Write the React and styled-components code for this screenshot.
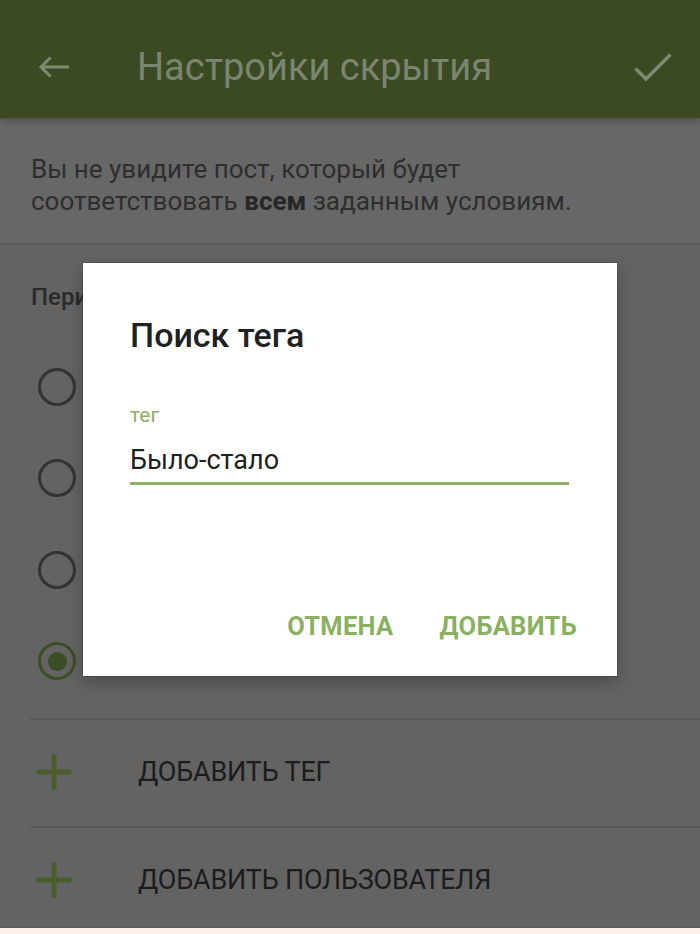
import React from "react"
import styled, { createGlobalStyle } from "styled-components"

const GlobalStyle = createGlobalStyle`
  body {
    margin: 0;
    font-family: Roboto, "Noto Sans", sans-serif;
    background: #636363;
  }
`

const Screen = styled.div`
  position: relative;
  width: 700px;
  height: 934px;
  display: flex;
  flex-direction: column;
  overflow: hidden;
  background: #636363;
`
const AppBar = styled.header`
  flex: 0 0 118px;
  box-sizing: border-box;
  display: flex;
  align-items: center;
  padding: 16px 28px 0 38px;
  background: #3b4a23;
  box-shadow: 0 3px 6px rgba(0, 0, 0, 0.25);
  position: relative;
  z-index: 1;
  color: #7d8a71;
`
const BarTitle = styled.h1`
  margin: 0 0 0 67px;
  font-size: 38px;
  font-weight: 400;
  line-height: 44px;
  color: #7b8670;
`
const BarAction = styled.div`
  margin-left: auto;
  display: flex;
`
const Info = styled.div`
  flex: 0 0 auto;
  height: 127px;
  box-sizing: border-box;
  padding: 35px 20px 0 31px;
  background: #676767;
  border-bottom: 2px solid #5c5c5c;
  font-size: 26px;
  line-height: 32px;
  color: #2e2e2e;
  b {
    font-weight: 700;
    color: #262626;
  }
`
const Content = styled.div`
  flex: 1;
  overflow: hidden;
`
const SectionTitle = styled.div`
  padding: 37px 0 0 31px;
  font-size: 24px;
  font-weight: 500;
  line-height: 30px;
  color: #2a2a2a;
`
const RadioList = styled.div`
  padding-top: 29px;
`
const RadioRow = styled.div`
  height: 91.5px;
  display: flex;
  align-items: center;
  padding-left: 38px;
`
const Radio = styled.span`
  width: 38px;
  height: 38px;
  box-sizing: border-box;
  border-radius: 50%;
  border: 3.5px solid ${props => (props.checked ? "#3d4d25" : "#333333")};
  display: flex;
  align-items: center;
  justify-content: center;
  &::after {
    content: "";
    display: ${props => (props.checked ? "block" : "none")};
    width: 19px;
    height: 19px;
    border-radius: 50%;
    background: #3d4d25;
  }
`
const ActionList = styled.div`
  margin-top: 11px;
  margin-left: 30px;
`
const ActionRow = styled.div`
  height: 108px;
  display: flex;
  align-items: center;
  border-top: 2px solid #585858;
  font-size: 27px;
  color: #1c1c1c;
  gap: 66px;
  padding-left: 6px;
  padding-bottom: 2px;
  box-sizing: border-box;
`
const ActionLabel = styled.span`
  letter-spacing: -0.2px;
`
const BottomStrip = styled.div`
  flex: 0 0 6px;
  background: #fcefea;
  border-top: 1px solid #5a5a5a;
`
const Dialog = styled.div`
  position: absolute;
  left: 83px;
  top: 263px;
  width: 534px;
  height: 413px;
  box-sizing: border-box;
  padding: 52px 48px 0 47px;
  background: #ffffff;
  box-shadow: 0 0 0 1px rgba(0, 0, 0, 0.12), 0 6px 16px rgba(0, 0, 0, 0.25);
  display: flex;
  flex-direction: column;
`
const DialogTitle = styled.h2`
  margin: 0;
  font-size: 34px;
  font-weight: 500;
  line-height: 40px;
  color: #212121;
`
const Field = styled.div`
  margin-top: 48px;
  display: flex;
  flex-direction: column;
`
const FieldLabel = styled.label`
  font-size: 21px;
  line-height: 24px;
  color: #8bb162;
`
const FieldInput = styled.div`
  margin-top: 17px;
  font-size: 27px;
  line-height: 32px;
  color: #202020;
  padding-bottom: 6px;
  border-bottom: 3px solid #8db165;
`
const Buttons = styled.div`
  margin-top: auto;
  margin-right: -8px;
  margin-bottom: 35px;
  display: flex;
  justify-content: flex-end;
  gap: 46px;
`
const TextButton = styled.button`
  border: none;
  background: none;
  padding: 0;
  font-family: Roboto, sans-serif;
  font-size: 25.5px;
  line-height: 30px;
  font-weight: 700;
  color: #8ab15f;
  letter-spacing: 0.3px;
`

const BackIcon = () => (
  <svg width="32" height="22" viewBox="0 0 32 22" fill="none" stroke="currentColor" strokeWidth="3">
    <path d="M31 11H3M12.5 1.5 3 11l9.5 9.5" />
  </svg>
)
const CheckIcon = () => (
  <svg width="38" height="30" viewBox="0 0 38 30" fill="none" stroke="currentColor" strokeWidth="3.4">
    <path d="M1.5 16.5l10.5 10.5L36.5 2.5" />
  </svg>
)
const PlusIcon = () => (
  <svg width="36" height="36" viewBox="0 0 36 36">
    <path d="M18 2.5v31M2.5 18h31" stroke="#4a5d2b" strokeWidth="5" strokeLinecap="round" />
  </svg>
)

const App = () => {
  return (
    <Screen>
      <GlobalStyle />
      <AppBar>
        <BackIcon />
        <BarTitle>Настройки скрытия</BarTitle>
        <BarAction>
          <CheckIcon />
        </BarAction>
      </AppBar>
      <Info>
        Вы не увидите пост, который будет
        <br />
        соответствовать <b>всем</b> заданным условиям.
      </Info>
      <Content>
        <SectionTitle>Период скрытия</SectionTitle>
        <RadioList>
          {[0, 1, 2, 3].map(i => (
            <RadioRow key={i}>
              <Radio checked={i === 3} />
            </RadioRow>
          ))}
        </RadioList>
        <ActionList>
          <ActionRow>
            <PlusIcon />
            <ActionLabel>ДОБАВИТЬ ТЕГ</ActionLabel>
          </ActionRow>
          <ActionRow>
            <PlusIcon />
            <ActionLabel>ДОБАВИТЬ ПОЛЬЗОВАТЕЛЯ</ActionLabel>
          </ActionRow>
        </ActionList>
      </Content>
      <BottomStrip />
      <Dialog>
        <DialogTitle>Поиск тега</DialogTitle>
        <Field>
          <FieldLabel>тег</FieldLabel>
          <FieldInput>Было-стало</FieldInput>
        </Field>
        <Buttons>
          <TextButton>ОТМЕНА</TextButton>
          <TextButton>ДОБАВИТЬ</TextButton>
        </Buttons>
      </Dialog>
    </Screen>
  )
}

export default App
